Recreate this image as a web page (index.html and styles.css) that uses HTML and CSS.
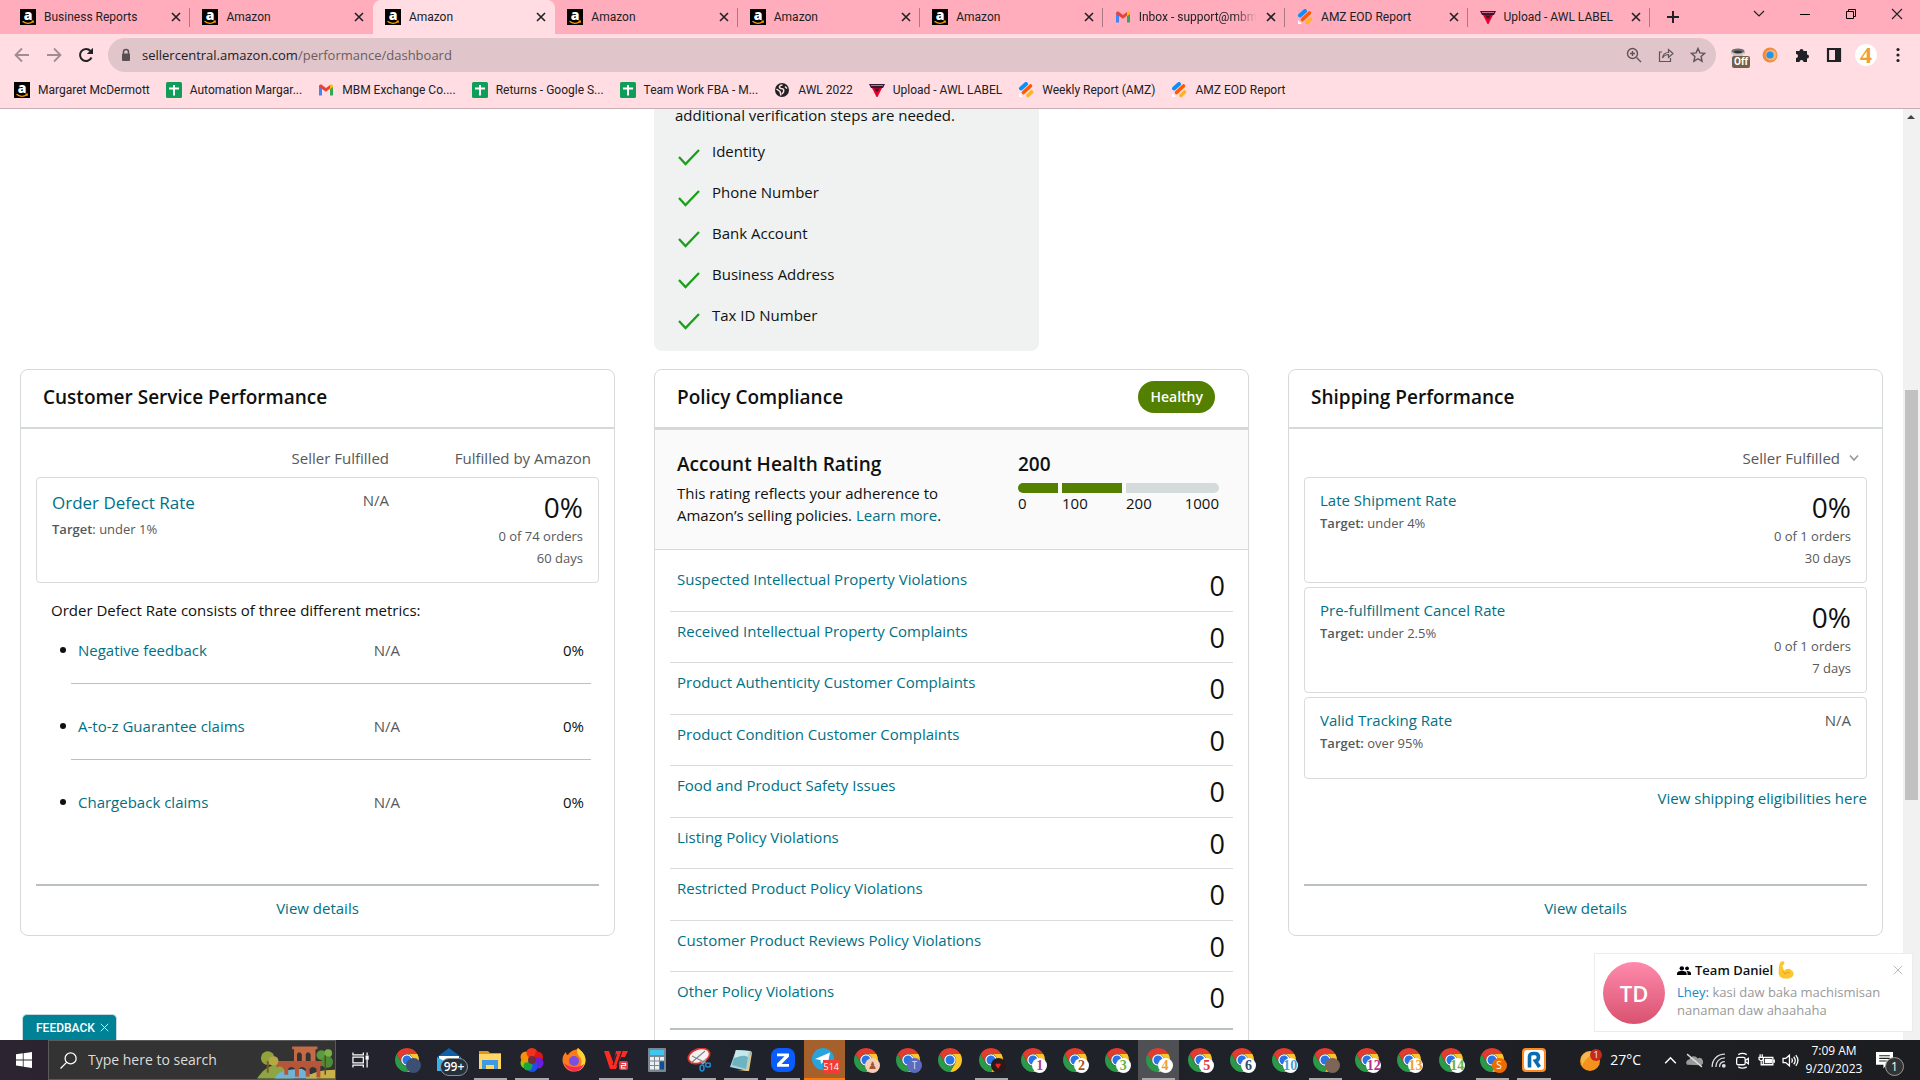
FILE: index.html
```html
<!DOCTYPE html>
<html lang="en">
<head>
<meta charset="utf-8">
<title>Amazon</title>
<link rel="stylesheet" href="styles.css">
</head>
<body>
<svg class="sprite" aria-hidden="true">
  <symbol id="amazon" viewBox="0 0 16 16"><rect width="16" height="16" fill="#000"/><text x="8" y="11" font-family="Open Sans, sans-serif" font-weight="800" font-size="14" fill="#fff" text-anchor="middle">a</text><path d="M2.5 12.3c3 2.6 7.500 2.600 10.300.4M11.500 12.200l1.800-.1-.3 1.700" fill="none" stroke="#f90" stroke-width="1.200"/></symbol>
  <symbol id="sheet" viewBox="0 0 16 16"><rect width="16" height="16" rx="1.500" fill="#109d59"/><path d="M8 3v10.500M3 6.500h10" stroke="#fff" stroke-width="1.900"/></symbol>
  <symbol id="gmail" viewBox="0 0 16 16"><path d="M1 13.500V4l3 2.200v7.300z" fill="#4285f4"/><path d="M12 13.500V6.200L15 4v9.500z" fill="#34a853"/><path d="M1 4.500C1 2.500 3 2.200 4 3l4 3 4-3v3.500L8 9.800 1 5z" fill="#ea4335"/><path d="M12 3c1-.8 3-.5 3 1.500V5l-3 2.200z" fill="#fbbc04"/></symbol>
  <symbol id="globe" viewBox="0 0 16 16"><circle cx="8" cy="8" r="7" fill="#202124"/><path d="M8.500 3C5 3 4.500 6 7 6.500c3 .5 3 1 2.500 3.500L8 12M2.500 7 6 9.500l1 4M11 4.500l2 2" fill="none" stroke="#ffdde3" stroke-width="1.500"/></symbol>
  <symbol id="awl" viewBox="0 0 16 16"><path d="M0 2h16l-2 4H2z" fill="#3a1630"/><path d="M2 3.500h12" stroke="#d66a8c" stroke-width="1"/><path d="M3 6h10L8.500 15h-1z" fill="#e4002b"/><path d="M5 6.500h6L8 10z" fill="#3a1630"/></symbol>
  <symbol id="pack" viewBox="0 0 16 16"><path d="M3 6.500 8 2" stroke="#0a8fff" stroke-width="4" stroke-linecap="round"/><path d="M5.500 10.500 12.500 4" stroke="#ff5a00" stroke-width="3.600" stroke-linecap="round"/><path d="M10 13.500 13.500 10" stroke="#ffb41f" stroke-width="3.600" stroke-linecap="round"/><path d="M1 11v4h4z" fill="#fff"/></symbol>
  <symbol id="close" viewBox="0 0 12 12"><path d="M2 2l8 8M10 2l-8 8" fill="none" stroke="currentColor" stroke-width="1.600"/></symbol>
  <symbol id="thinclose" viewBox="0 0 12 12"><path d="M1 1l10 10M11 1 1 11" fill="none" stroke="currentColor" stroke-width="1.100"/></symbol>
  <symbol id="check" viewBox="0 0 24 18"><path d="M2 9l6.500 7L22 2" fill="none" stroke="#18a018" stroke-width="2.300"/></symbol>
  <symbol id="chrome" viewBox="0 0 24 24"><path d="M1.610 6A12 12 0 0 1 22.390 6H12A6 6 0 0 0 6.800 15Z" fill="#e33b2e"/><path d="M22.390 6A12 12 0 0 1 12 24L17.200 15A6 6 0 0 0 12 6Z" fill="#fcc629"/><path d="M12 24A12 12 0 0 1 1.610 6L6.800 15A6 6 0 0 0 17.200 15Z" fill="#2a9a48"/><circle cx="12" cy="12" r="5.800" fill="#fff"/><circle cx="12" cy="12" r="4.500" fill="#2a74e8"/></symbol>
</svg>

<header class="browser">
  <div class="tabstrip">
    <div class="tabs">
      <div class="tab"><svg class="fav"><use href="#amazon"/></svg><span class="tab-title">Business Reports</span><button class="tab-close" aria-label="Close tab"><svg><use href="#close"/></svg></button></div>
      <div class="tab no-line"><svg class="fav"><use href="#amazon"/></svg><span class="tab-title">Amazon</span><button class="tab-close" aria-label="Close tab"><svg><use href="#close"/></svg></button></div>
      <div class="tab active"><svg class="fav"><use href="#amazon"/></svg><span class="tab-title">Amazon</span><button class="tab-close" aria-label="Close tab"><svg><use href="#close"/></svg></button></div>
      <div class="tab"><svg class="fav"><use href="#amazon"/></svg><span class="tab-title">Amazon</span><button class="tab-close" aria-label="Close tab"><svg><use href="#close"/></svg></button></div>
      <div class="tab"><svg class="fav"><use href="#amazon"/></svg><span class="tab-title">Amazon</span><button class="tab-close" aria-label="Close tab"><svg><use href="#close"/></svg></button></div>
      <div class="tab"><svg class="fav"><use href="#amazon"/></svg><span class="tab-title">Amazon</span><button class="tab-close" aria-label="Close tab"><svg><use href="#close"/></svg></button></div>
      <div class="tab"><svg class="fav"><use href="#gmail"/></svg><span class="tab-title fade">Inbox - support@mbm</span><button class="tab-close" aria-label="Close tab"><svg><use href="#close"/></svg></button></div>
      <div class="tab"><svg class="fav"><use href="#pack"/></svg><span class="tab-title">AMZ EOD Report</span><button class="tab-close" aria-label="Close tab"><svg><use href="#close"/></svg></button></div>
      <div class="tab"><svg class="fav"><use href="#awl"/></svg><span class="tab-title">Upload - AWL LABEL</span><button class="tab-close" aria-label="Close tab"><svg><use href="#close"/></svg></button></div>
    </div>
    <button class="new-tab" aria-label="New tab"><svg viewBox="0 0 14 14"><path d="M7 1v12M1 7h12" stroke="#202124" stroke-width="2"/></svg></button>
    <div class="window-controls">
      <button aria-label="Search tabs"><svg viewBox="0 0 12 12"><path d="M1 3l5 5 5-5" fill="none" stroke="#202124" stroke-width="1.200"/></svg></button>
      <button aria-label="Minimize"><svg viewBox="0 0 12 12"><path d="M1 6.500h10" stroke="#000"/></svg></button>
      <button aria-label="Restore"><svg viewBox="0 0 12 12"><path d="M1.500 3.500h7v7h-7zM3.500 3.500v-2h7v7h-2" fill="none" stroke="#000"/></svg></button>
      <button aria-label="Close"><svg><use href="#thinclose"/></svg></button>
    </div>
  </div>

  <div class="toolbar">
    <button class="nav-btn muted" aria-label="Back"><svg viewBox="0 0 16 16"><path d="M15 8H2M8 1.500 1.500 8 8 14.500" fill="none" stroke="currentColor" stroke-width="1.800"/></svg></button>
    <button class="nav-btn muted" aria-label="Forward"><svg viewBox="0 0 16 16"><path d="M1 8h13M8 1.500 14.500 8 8 14.500" fill="none" stroke="currentColor" stroke-width="1.800"/></svg></button>
    <button class="nav-btn" aria-label="Reload"><svg viewBox="0 0 16 16"><path d="M13.500 10.500A6 6 0 1 1 12.500 4" fill="none" stroke="currentColor" stroke-width="2"/><path d="M15 .8V7H8.800z" fill="currentColor"/></svg></button>
    <div class="omnibox">
      <svg class="lock" viewBox="0 0 10 14"><path d="M2.500 6V4a2.500 2.500 0 0 1 5 0v2" fill="none" stroke="#5a4f52" stroke-width="1.500"/><rect x="1" y="5.500" width="8" height="7.500" rx="1" fill="#5a4f52"/></svg>
      <span class="url">sellercentral.amazon.com<span class="path">/performance/dashboard</span></span>
      <button aria-label="Zoom"><svg viewBox="0 0 16 16"><circle cx="6.500" cy="6.500" r="5" fill="none" stroke="currentColor" stroke-width="1.400"/><path d="M10.500 10.500 15 15M4 6.500h5M6.500 4v5" stroke="currentColor" stroke-width="1.400"/></svg></button>
      <button aria-label="Share"><svg viewBox="0 0 16 16"><path d="M4 5H1.500v9.500h11V11M4.500 11c.5-4 3-5.500 6-5.500V2.500L15 6.500l-4.500 4v-3c-2.500 0-4.500 1-6 3.500z" fill="none" stroke="currentColor" stroke-width="1.200"/></svg></button>
      <button aria-label="Bookmark"><svg viewBox="0 0 16 16"><path d="M8 1.500l1.900 4.400 4.800.4-3.600 3.200 1 4.700L8 11.700l-4.100 2.500 1-4.700L1.300 6.300l4.800-.4z" fill="none" stroke="currentColor" stroke-width="1.400"/></svg></button>
    </div>
    <div class="extensions">
      <button class="ext-off" aria-label="Extension off"><svg viewBox="0 0 16 16"><path d="M1 4v3h2v5h10V7h2V4z" fill="#c9c4c4"/><ellipse cx="8" cy="4" rx="6.500" ry="2.500" fill="#6e6e6e"/><ellipse cx="8" cy="5" rx="4" ry="1.300" fill="#333"/></svg><span class="off">Off</span></button>
      <button aria-label="Firefox relay"><svg viewBox="0 0 16 16"><circle cx="8" cy="8" r="7.500" fill="#f28a3c"/><circle cx="9" cy="8" r="5.500" fill="#f7b277"/><circle cx="8" cy="8" r="3.600" fill="#2196e8"/></svg></button>
      <button aria-label="Extensions"><svg viewBox="0 0 16 16"><path d="M2 4h3.500a2 2 0 1 1 4 0H13v3.500a2 2 0 1 1 0 4V15H9.500a2 2 0 1 0-4 0H2v-4a2 2 0 1 0 0-4z" fill="#202124"/></svg></button>
      <button aria-label="Side panel"><svg viewBox="0 0 16 16"><path d="M2 2h12v12H2z" fill="none" stroke="#202124" stroke-width="2.200"/><path d="M9 2h5v12H9z" fill="#202124"/></svg></button>
      <button class="profile" aria-label="Profile">4</button>
      <button aria-label="Menu"><svg viewBox="0 0 16 16" fill="#202124"><circle cx="8" cy="2.500" r="1.600"/><circle cx="8" cy="8" r="1.600"/><circle cx="8" cy="13.500" r="1.600"/></svg></button>
    </div>
  </div>

  <nav class="bookmarks">
    <a href="#"><svg><use href="#amazon"/></svg>Margaret McDermott</a>
    <a href="#"><svg><use href="#sheet"/></svg>Automation Margar...</a>
    <a href="#"><svg><use href="#gmail"/></svg>MBM Exchange Co....</a>
    <a href="#"><svg><use href="#sheet"/></svg>Returns - Google S...</a>
    <a href="#"><svg><use href="#sheet"/></svg>Team Work FBA - M...</a>
    <a href="#"><svg><use href="#globe"/></svg>AWL 2022</a>
    <a href="#"><svg><use href="#awl"/></svg>Upload - AWL LABEL</a>
    <a href="#"><svg><use href="#pack"/></svg>Weekly Report (AMZ)</a>
    <a href="#"><svg><use href="#pack"/></svg>AMZ EOD Report</a>
  </nav>
</header>

<div class="viewport">
  <main class="page">
    <div class="columns">
      <section class="verification">
        <p>additional verification steps are needed.</p>
        <ul>
          <li><svg><use href="#check"/></svg>Identity</li>
          <li><svg><use href="#check"/></svg>Phone Number</li>
          <li><svg><use href="#check"/></svg>Bank Account</li>
          <li><svg><use href="#check"/></svg>Business Address</li>
          <li><svg><use href="#check"/></svg>Tax ID Number</li>
        </ul>
      </section>

      <section class="card service">
        <div class="card-head"><h2>Customer Service Performance</h2></div>
        <div class="card-body">
          <div class="labels two"><span>Seller Fulfilled</span><span>Fulfilled by Amazon</span></div>
          <div class="metric">
            <div class="metric-name"><a class="large" href="#">Order Defect Rate</a><p><b>Target</b>: under 1%</p></div>
            <span class="na">N/A</span>
            <div class="metric-value"><strong>0%</strong><span>0 of 74 orders</span><span>60 days</span></div>
          </div>
          <p class="intro">Order Defect Rate consists of three different metrics:</p>
          <ul class="breakdown">
            <li><div><a href="#">Negative feedback</a><span class="na">N/A</span><span class="pct">0%</span></div></li>
            <li><div><a href="#">A-to-z Guarantee claims</a><span class="na">N/A</span><span class="pct">0%</span></div></li>
            <li><div><a href="#">Chargeback claims</a><span class="na">N/A</span><span class="pct">0%</span></div></li>
          </ul>
          <div class="card-foot"><a href="#">View details</a></div>
        </div>
      </section>

      <section class="card policy">
        <div class="card-head"><h2>Policy Compliance</h2><span class="pill">Healthy</span></div>
        <div class="rating">
          <div class="rating-text"><h2>Account Health Rating</h2><p>This rating reflects your adherence to Amazon’s selling policies. <a href="#">Learn more</a>.</p></div>
          <div class="rating-scale">
            <h2>200</h2>
            <div class="scale"><i class="on"></i><i class="on"></i><i></i></div>
            <div class="scale-labels"><span>0</span><span>100</span><span>200</span><span>1000</span></div>
          </div>
        </div>
        <ul class="violations">
          <li><a href="#">Suspected Intellectual Property Violations</a><span>0</span></li>
          <li><a href="#">Received Intellectual Property Complaints</a><span>0</span></li>
          <li><a href="#">Product Authenticity Customer Complaints</a><span>0</span></li>
          <li><a href="#">Product Condition Customer Complaints</a><span>0</span></li>
          <li><a href="#">Food and Product Safety Issues</a><span>0</span></li>
          <li><a href="#">Listing Policy Violations</a><span>0</span></li>
          <li><a href="#">Restricted Product Policy Violations</a><span>0</span></li>
          <li><a href="#">Customer Product Reviews Policy Violations</a><span>0</span></li>
          <li><a href="#">Other Policy Violations</a><span>0</span></li>
        </ul>
      </section>

      <section class="card shipping">
        <div class="card-head"><h2>Shipping Performance</h2></div>
        <div class="card-body">
          <div class="labels"><button class="fulfil">Seller Fulfilled<svg viewBox="0 0 10 10"><path d="M1 2.500l4 4.500 4-4.500" fill="none" stroke="#999" stroke-width="1.700"/></svg></button></div>
          <div class="metric-list">
            <div class="metric">
              <div class="metric-name"><a href="#">Late Shipment Rate</a><p><b>Target:</b> under 4%</p></div>
              <div class="metric-value"><strong>0%</strong><span>0 of 1 orders</span><span>30 days</span></div>
            </div>
            <div class="metric">
              <div class="metric-name"><a href="#">Pre-fulfillment Cancel Rate</a><p><b>Target:</b> under 2.5%</p></div>
              <div class="metric-value"><strong>0%</strong><span>0 of 1 orders</span><span>7 days</span></div>
            </div>
            <div class="metric">
              <div class="metric-name"><a href="#">Valid Tracking Rate</a><p><b>Target:</b> over 95%</p></div>
              <span class="na">N/A</span>
            </div>
          </div>
          <a class="eligibility" href="#">View shipping eligibilities here</a>
          <div class="card-foot"><a href="#">View details</a></div>
        </div>
      </section>
    </div>
  </main>
  <div class="scrollbar"><svg viewBox="0 0 16 16"><path d="M4 10l4-4 4 4z" fill="#444"/></svg><span class="thumb"></span></div>
  <button class="feedback">FEEDBACK<svg><use href="#thinclose"/></svg></button>
  <aside class="toast">
    <span class="avatar">TD</span>
    <div class="toast-text">
      <h3><svg viewBox="0 0 16 12"><circle cx="5.500" cy="3.500" r="2.500"/><path d="M0 11V9.500C0 7 3 6.500 5.500 6.500S11 7 11 9.500V11z"/><circle cx="11.500" cy="3.500" r="2.200"/><path d="M12 11V9c0-1-.5-2-1.300-2.500C13 6.300 16 7 16 9v2z"/></svg>Team Daniel <svg class="arm" viewBox="0 0 20 22"><path d="M3 1.500C4.500 0 8 0 8 2S7 5 5.800 5c0 2.500.8 4.500 2 7 1.500-2 4.500-3 7.200-2 3.500 1.500 5 4.500 4 7.500-1.500 3.500-6 4.500-10 4C3.500 21 1 18 1 14c0-5 .5-10 2-12.500z" fill="#fdc530"/><path d="M6 13c2 .5 3 2 3 3.500M9 15.500c2-2 4-2 5.500-1" fill="none" stroke="#e39a13" stroke-width="1.200"/></svg></h3>
      <p><b>Lhey:</b> kasi daw baka machismisan nanaman daw ahaahaha</p>
    </div>
    <button aria-label="Dismiss"><svg><use href="#thinclose"/></svg></button>
  </aside>
</div>

<footer class="taskbar">
  <button class="start" aria-label="Start"><svg viewBox="0 0 16 16" fill="#fff"><path d="M0 2.300 6.800 1.300v6.200H0zM7.600 1.200 16 0v7.500H7.600zM0 8.400h6.800v6.200L0 13.600zM7.600 8.400H16V16l-8.400-1.200z"/></svg></button>
  <label class="search">
    <svg class="lens" viewBox="0 0 16 16"><circle cx="10" cy="6" r="5.200" fill="none" stroke="#fff" stroke-width="1.200"/><path d="M6.200 9.800.5 15.500" stroke="#fff" stroke-width="1.200"/></svg>
    <input type="text" placeholder="Type here to search" aria-label="Search">
    <svg class="scene" viewBox="0 0 80 34"><path d="M0 34C8 22 14 20 24 20l14 14z" fill="#8da544"/><path d="M18 34c4-8 12-9 28-10l16 10z" fill="#6db4d8"/><path d="M50 34c4-6 16-9 30-9v9z" fill="#c9b14a"/><path d="M36 1h26v3h-2v12h-5V9q-3-4-5 0v7h-4V9q-3-4-5 0v7h-3V4h-2z" fill="#c46a46"/><path d="M20 16h48v5h-3v12h-4V24q-4-4-7 0v8h-4v-8q-4-4-7 0v8h-4v-8q-4-4-7 0v6h-4v-6q-4-4-8-1z" fill="#b5563a"/><circle cx="11" cy="13" r="7" fill="#93a03c"/><circle cx="17" cy="16" r="5" fill="#b3aa45"/><path d="M11 16v12" stroke="#7a5a2c" stroke-width="2"/><circle cx="66" cy="10" r="5" fill="#5c9a3c"/><circle cx="73" cy="8" r="4" fill="#79b04a"/><circle cx="72" cy="17" r="6" fill="#4f8b37"/><path d="M70 10v20" stroke="#5b4a25" stroke-width="1.500"/></svg>
  </label>
  <button class="taskview" aria-label="Task view"><svg viewBox="0 0 18 16" fill="none" stroke="#fff" stroke-width="1.300"><path d="M1 0v2.500h11V0M1 16v-2.500h11V16M1 5h11v6H1zM16 0v3M16 8v8"/><path d="M15 4h2v3h-2z" fill="#fff"/></svg></button>
  <div class="apps">
    <button class="app" aria-label="Chrome"><svg><use href="#chrome"/></svg><span class="badge" style="background:#3d4f73"></span></button>
    <button class="app" aria-label="Mail"><svg viewBox="0 0 24 24"><path d="M0 9 12 0l12 9z" fill="#0e62ad"/><path d="M2 8h20v8H2z" fill="#fff"/><path d="M0 9l12 7 12-7v14H0z" fill="#36b1ec"/></svg><span class="count">99+</span></button>
    <button class="app open" aria-label="File Explorer"><svg viewBox="0 0 24 24"><path d="M1 3h9l2 2h11v4H1z" fill="#d99a1c"/><path d="M1 6h22v15H1z" fill="#ffd667"/><path d="M4 21v-9h16v9h-4v-4H8v4z" fill="#3e9be0"/></svg></button>
    <button class="app open" aria-label="Colors"><svg viewBox="0 0 24 24"><circle cx="12" cy="5.500" r="5.500" fill="#f3321d"/><circle cx="17.500" cy="9" r="5.500" fill="#e01616"/><circle cx="18" cy="15" r="5.500" fill="#6a1ddb"/><circle cx="12" cy="18.500" r="5.500" fill="#1d4df0"/><circle cx="6" cy="15" r="5.500" fill="#8fce12"/><circle cx="8" cy="18" r="4.500" fill="#17a83c"/><circle cx="6" cy="9" r="5.500" fill="#f9920b"/><circle cx="11" cy="5" r="4.500" fill="#f3321d"/><circle cx="12" cy="12" r="4" fill="#752d35"/></svg></button>
    <button class="app" aria-label="Firefox"><svg viewBox="0 0 24 24"><path d="M12 2c2 0 3-1 4-2 2 2 7 6 7.500 12A11.500 11.500 0 1 1 .5 12C.500 8 2 6 4 4c0 2 1 3 2 3 1-2 3-4 6-5z" fill="#ff7a1a"/><path d="M16 0c3 3 8 6 7.500 13-.5 6-5 10-9 10 5-3 6-9 4-13-1-2-5-4-2.500-10z" fill="#ffd23a"/><path d="M2 15c2 6 7 8.500 12 8 5-.5 7-4 8-7-4 4-15 4-20-1z" fill="#f5295b"/><circle cx="12" cy="13" r="5" fill="#7b4fe0"/></svg></button>
    <button class="app open" aria-label="WPS Office"><svg viewBox="0 0 24 24"><path d="M0 3h5l4.500 12L12 3h12l-3 6h-4l-5 12H6z" fill="#ff2b22"/><path d="M12.500 6 9 17M18 3l-5 15" fill="none" stroke="#22232d" stroke-width="1.200"/><rect x="15" y="13" width="9" height="9" rx="2" fill="#e0414b"/><path d="M17.500 15.500h4v2h-4v2.500h4" fill="none" stroke="#fff" stroke-width="1.200"/></svg></button>
    <button class="app" aria-label="Calculator"><svg viewBox="0 0 24 24"><rect x="3" width="18" height="24" rx="1" fill="#7b8790"/><path d="M5 2h14v5H5z" fill="#40c4f0"/><path d="M5 9h4v3.500H5zM10 9h4v3.500h-4zM15 9h4v3.500h-4zM5 13.500h4V17H5zM10 13.500h4V17h-4zM5 18h4v3.500H5zM10 18h4v3.500h-4z" fill="#eee"/><path d="M15 13.500h4v8h-4z" fill="#0d4f96"/></svg></button>
    <button class="app open" aria-label="Snipping Tool"><svg viewBox="0 0 24 24"><ellipse cx="12" cy="8" rx="11" ry="7" transform="rotate(-20 12 8)" fill="#f2f2f2" stroke="#d9332b" stroke-width="1.800"/><path d="M4 15 18 3M5 8l14 7" stroke="#888" stroke-width="1.200"/><path d="M13 12l3 4M19 11l-3 5" stroke="#999" stroke-width="1.500"/><ellipse cx="15" cy="20" rx="2" ry="3" fill="none" stroke="#2187cf" stroke-width="1.600"/><ellipse cx="21" cy="17" rx="2.500" ry="2" fill="none" stroke="#2187cf" stroke-width="1.600"/></svg></button>
    <button class="app open" aria-label="Notepad"><svg viewBox="0 0 24 24"><path d="M7 2l15 1-3 20L1 19z" fill="#a8d5dd"/><path d="M7 2l13 1-3 18L3 17z" fill="#6fb3c0"/><path d="M7 2l13 1-1 6C14 6 9 9 5 10z" fill="#c9e8ec"/><path d="M22 3l1 2-3 18H8l10-1z" fill="#e3c683"/></svg></button>
    <button class="app open" aria-label="Zoom"><svg viewBox="0 0 24 24"><rect width="24" height="24" rx="8" fill="#0b5cff"/><path d="M6 5.500h12v3L10.500 16H18v2.800H6v-3L13.500 8.300H6z" fill="#fff"/></svg></button>
    <button class="app telegram" aria-label="Telegram"><svg viewBox="0 0 24 24"><circle cx="11" cy="12" r="11" fill="#29a3dc"/><path d="M3 12 18 5.500 15.500 18l-4.500-3-2 2-.5-4z" fill="#fff"/></svg><span class="red">514</span></button>
    <button class="app" aria-label="Chrome profile"><svg><use href="#chrome"/></svg><span class="badge plain" style="background:#f6cdb5;color:#a0543a">♟</span></button>
    <button class="app" aria-label="Chrome profile T"><svg><use href="#chrome"/></svg><span class="badge plain" style="background:#5c6bc0;color:#dde">T</span></button>
    <button class="app" aria-label="Chrome"><svg><use href="#chrome"/></svg></button>
    <button class="app open" aria-label="Chrome profile"><svg><use href="#chrome"/></svg><span class="badge plain" style="background:#2a1a1a;color:#e22">♥</span></button>
    <button class="app" aria-label="Chrome 1"><svg><use href="#chrome"/></svg><span class="badge" style="color:#b03a9a">1</span></button>
    <button class="app" aria-label="Chrome 2"><svg><use href="#chrome"/></svg><span class="badge" style="color:#a8501e">2</span></button>
    <button class="app" aria-label="Chrome 3"><svg><use href="#chrome"/></svg><span class="badge" style="color:#6cb33f">3</span></button>
    <button class="app open current" aria-label="Chrome 4"><svg><use href="#chrome"/></svg><span class="badge" style="color:#efa032">4</span></button>
    <button class="app" aria-label="Chrome 5"><svg><use href="#chrome"/></svg><span class="badge" style="color:#e0343a">5</span></button>
    <button class="app" aria-label="Chrome 6"><svg><use href="#chrome"/></svg><span class="badge" style="color:#2c4f70">6</span></button>
    <button class="app" aria-label="Chrome 10"><svg><use href="#chrome"/></svg><span class="badge" style="color:#4a9fd8">10</span></button>
    <button class="app open" aria-label="Chrome profile"><svg><use href="#chrome"/></svg><span class="badge" style="background:#7d6658"></span></button>
    <button class="app" aria-label="Chrome 12"><svg><use href="#chrome"/></svg><span class="badge" style="color:#b0308e">12</span></button>
    <button class="app" aria-label="Chrome 13"><svg><use href="#chrome"/></svg><span class="badge" style="color:#efa032">13</span></button>
    <button class="app" aria-label="Chrome 14"><svg><use href="#chrome"/></svg><span class="badge" style="color:#6cb33f">14</span></button>
    <button class="app open" aria-label="Chrome S"><svg><use href="#chrome"/></svg><span class="badge plain" style="background:#ef6c00;color:#fff">S</span></button>
    <button class="app open" aria-label="R"><svg viewBox="0 0 24 24"><rect width="24" height="24" rx="4" fill="#ff8a1f"/><rect x="2" y="2" width="20" height="20" rx="3" fill="#fff"/><path d="M7.500 19.500V9c0-3 1.500-3.500 4-3.500h1.500c4.500 0 4.500 6.500.5 7.500l4 6" fill="none" stroke="#0b6bb0" stroke-width="3.600"/></svg></button>
  </div>
  <div class="tray">
    <button class="weather"><svg viewBox="0 0 24 24"><circle cx="11" cy="13" r="10" fill="#f5921e"/><path d="M2 10a10 10 0 0 1 16-4c-5 0-12 4-15 12z" fill="#f7b84a"/><circle cx="17" cy="7" r="6" fill="#c42b1c"/><text x="17" y="10" font-family="Open Sans, sans-serif" font-size="9" fill="#fff" text-anchor="middle">1</text></svg>27°C</button>
    <button aria-label="Show hidden icons"><svg viewBox="0 0 16 16"><path d="M3 10.500l5-5 5 5" fill="none" stroke="#fff" stroke-width="1.400"/></svg></button>
    <button aria-label="OneDrive"><svg viewBox="0 0 16 16"><path d="M1 12a3 3 0 0 1 2-5 4.500 4.500 0 0 1 8-1 3.500 3.500 0 0 1 3 6.500z" fill="#9a9a9a"/><path d="M1 2l14 12" stroke="#ddd" stroke-width="1.300"/></svg></button>
    <button aria-label="Network"><svg viewBox="0 0 16 16" fill="none" stroke="#ddd" stroke-width="1.200"><path d="M2 14C2 7 7 2 14 2M5.500 14c0-5 3.500-8.500 8.500-8.500M9 14c0-3 2-5 5-5"/><circle cx="13" cy="13" r="1.200" fill="#ddd"/></svg></button>
    <button aria-label="Meet now"><svg viewBox="0 0 16 16" fill="none" stroke="#fff" stroke-width="1.200"><rect x="2.500" y="5" width="8" height="7" rx="1.500"/><path d="M10.500 8l3-2v5l-3-2M4 2.500Q8 0 12 2.500M4 14Q8 16.500 12 14"/></svg></button>
    <button aria-label="Battery"><svg viewBox="0 0 16 16" fill="none" stroke="#fff" stroke-width="1.200"><path d="M5 5h9v7H5zM15.300 7v3M2 2v3M4 2v3M1 5h4v2L3 8.500 1 7zM3 8v4h2"/><path d="M7 7h5.500v3H7z" fill="#fff"/></svg></button>
    <button aria-label="Volume"><svg viewBox="0 0 16 16" fill="none" stroke="#fff" stroke-width="1.200"><path d="M1 6h2.500L7 3v10l-3.500-3H1zM9 6q1.500 2 0 4M11 4.500q3 3.500 0 7M13 3q4 5 0 10"/></svg></button>
    <time class="clock"><span>7:09 AM</span><span>9/20/2023</span></time>
    <button class="notify" aria-label="Notifications"><svg viewBox="0 0 16 16"><path d="M0 0h16v12h-6l-3 3.500V12H0z" fill="#fff"/><path d="M3 3.500h10M3 6h10M3 8.500h7" stroke="#222"/></svg><span>1</span></button>
  </div>
</footer>
</body>
</html>
```
FILE: styles.css
```css
* { box-sizing: border-box; }
html, body { height: 100%; margin: 0; }
body {
  display: flex;
  flex-direction: column;
  overflow: hidden;
  background: #fff;
  color: #0f1111;
  font: 15px/20px "Open Sans", "Noto Sans", sans-serif;
}
h2, h3, p, ul { margin: 0; padding: 0; }
ul { list-style: none; }
a { color: #007185; text-decoration: none; }
button { margin: 0; padding: 0; border: 0; background: none; color: inherit; font: inherit; }
svg { display: block; flex: none; }
.sprite { position: absolute; width: 0; height: 0; }

/* Browser chrome */
.browser { flex: none; color: #202124; font: 12px/16px Roboto, "Open Sans", sans-serif; }
.tabstrip { display: flex; align-items: stretch; height: 34px; padding-left: 8px; background: #ffadbc; }
.tabs { display: flex; flex: 1; min-width: 0; }
.tab { position: relative; display: flex; flex: 1 1 0; align-items: center; gap: 8px; min-width: 0; padding: 0 8px 0 12px; }
.tab::after { content: ""; position: absolute; right: 0; top: 8px; width: 1px; height: 19px; background: #a87a84; }
.tab.no-line::after, .tab.active::after { display: none; }
.tab.active { border-radius: 8px 8px 0 0; background: #ffdde3; }
.fav { width: 16px; height: 16px; }
.tab-title { flex: 1; min-width: 0; overflow: hidden; white-space: nowrap; }
.tab-title.fade { -webkit-mask-image: linear-gradient(90deg, #000 80%, transparent); mask-image: linear-gradient(90deg, #000 80%, transparent); }
.tab-close svg { width: 12px; height: 12px; }
.new-tab { display: grid; width: 46px; place-items: center; }
.new-tab svg { width: 14px; height: 14px; }
.window-controls { display: flex; padding: 0 0 6px 40px; }
.window-controls button { display: grid; width: 46px; place-items: center; }
.window-controls svg { width: 12px; height: 12px; }

.toolbar { display: flex; align-items: center; height: 38px; padding: 4px 6px 0 6px; background: #ffdde3; }
.nav-btn { display: grid; width: 32px; place-items: center; }
.nav-btn svg { width: 16px; height: 16px; }
.muted { color: #a08d91; }
.omnibox { display: flex; flex: 1; align-items: center; height: 34px; margin-left: 6px; padding: 0 2px 0 13px; border-radius: 17px; background: #e0c5ca; color: #5f5357; }
.lock { width: 10px; height: 14px; margin-right: 11px; }
.url { flex: 1; color: #202124; font: 13px/18px "Open Sans", sans-serif; }
.path { color: #6b5d61; }
.omnibox button { display: grid; width: 32px; place-items: center; }
.omnibox svg:not(.lock) { width: 16px; height: 16px; }
.extensions { display: flex; align-items: center; padding-left: 6px; }
.extensions button { display: grid; position: relative; width: 32px; height: 32px; place-items: center; }
.extensions svg { width: 16px; height: 16px; }
.extensions .off { position: absolute; left: 10px; top: 17px; padding: 0 2px; border-radius: 2px; background: #74604a; color: #fff; font-size: 10px; font-weight: 700; line-height: 12px; }
.extensions .profile { width: 22px; height: 22px; margin: 0 5px; border-radius: 50%; background: #fff; color: #efa032; font: 700 24px/22px "Liberation Serif", serif; }

.bookmarks { display: flex; align-items: center; gap: 16px; height: 37px; padding-left: 14px; border-bottom: 1px solid #c9adb2; background: #ffdde3; }
.bookmarks a { display: flex; align-items: center; gap: 8px; color: #202124; white-space: nowrap; }
.bookmarks svg { width: 16px; height: 16px; }

/* Page */
.viewport { position: relative; display: flex; flex: 1; min-height: 0; overflow: hidden; }
.page { flex: 1; min-width: 0; }
.columns { display: grid; grid-template-columns: repeat(3, minmax(0, 1fr)); column-gap: 39px; align-items: start; padding: 0 20px; }
.verification { grid-column: 2; width: 385px; margin: -7px 0 18px; padding: 3px 20px 5px 21px; border-radius: 8px; background: #f0f2f2; }
.verification li { display: flex; gap: 11px; height: 41px; }
.verification ul { padding-top: 16px; }
.verification li svg { width: 24px; height: 18px; margin: 7px 0 0 2px; }
.service { grid-column: 1; }

.card { border: 1px solid #d5d9d9; border-radius: 8px; background: #fff; }
.service, .shipping { display: flex; flex-direction: column; min-height: 567px; }
h2 { font-size: 19px; font-weight: 600; line-height: 28px; }
.card-head { display: flex; align-items: center; justify-content: space-between; height: 59px; padding: 0 33px 3px 22px; border-bottom: 2px solid #d5d9d9; }
.pill { padding: 0 12px; border-radius: 16px; background: #538000; color: #fff; font-size: 14px; font-weight: 600; line-height: 32px; }
.card-body { display: flex; flex: 1; flex-direction: column; padding: 19px 15px 17px; }
.labels { display: grid; padding-right: 8px; margin-bottom: 9px; color: #565959; text-align: right; }
.labels.two { grid-template-columns: 1fr 202px; }
.fulfil { display: flex; gap: 9px; align-items: center; justify-self: end; }
.fulfil svg { width: 10px; height: 10px; }
.metric { display: flex; min-height: 82px; padding: 12px 15px 13px; border: 1px solid #d9dcdc; border-radius: 4px; color: #565959; }
.metric-name { flex: 1; }
.metric-name a { display: block; }
.metric-name .large { font-size: 17px; line-height: 26px; }
.metric-name p { padding-top: 3px; font-size: 13px; }
.metric-name b { font-weight: 600; }
.metric-value { width: 194px; text-align: right; font-size: 13px; line-height: 22px; }
.metric-value span, .metric-value strong { display: block; }
.metric-value strong { color: #0f1111; font-size: 28px; font-weight: 400; line-height: 35px; }
.metric-list { display: grid; gap: 4px; }
.intro { padding: 17px 15px 20px; }
.breakdown { padding: 0 8px 0 24px; }
.breakdown li { display: flex; gap: 5px; }
.breakdown li::before { content: ""; flex: none; width: 6px; height: 6px; margin-top: 7px; border-radius: 50%; background: #0f1111; }
.breakdown li + li { padding-top: 32px; }
.breakdown div { display: grid; flex: 1; grid-template-columns: 1fr 100px 184px; padding: 0 7px; text-align: right; }
.breakdown li:not(:last-child) div { padding-bottom: 23px; border-bottom: 1px solid #babfbf; }
.breakdown a { text-align: left; }
.na { color: #565959; }
.card-foot { margin-top: auto; padding-top: 12px; border-top: 2px solid #babfbf; text-align: center; }
.eligibility { padding-top: 9px; text-align: right; }

.policy { min-height: 700px; }
.policy .card-head { height: 60px; border-bottom-width: 3px; }
.rating { display: flex; justify-content: space-between; height: 120px; padding: 20px 29px 0 22px; border-bottom: 1px solid #d5d9d9; background: #fafafa; }
.rating-text p { max-width: 280px; padding-top: 4px; line-height: 22px; }
.rating-scale { width: 201px; }
.scale { display: grid; grid-template-columns: 40px 60px 1fr; gap: 4px; padding-top: 5px; }
.scale i { height: 10px; background: #d5dbdb; }
.scale .on { background: #538000; }
.scale i:first-child { border-radius: 5px 0 0 5px; }
.scale i:last-child { border-radius: 0 5px 5px 0; }
.scale-labels { display: grid; grid-template-columns: 40px 60px 1fr 1fr; column-gap: 4px; }
.scale-labels span:last-child { text-align: right; }
.violations { display: grid; grid-template-rows: repeat(9, 1fr); min-height: 470px; margin: 10px 15px 0; padding-bottom: 4px; border-bottom: 2px solid #babfbf; }
.violations li { display: flex; justify-content: space-between; padding: 9px 8px 0 7px; border-bottom: 1px solid #d9dcdc; }
.violations li:last-child { border: 0; }
.violations span { font-size: 27px; line-height: 34px; }

.scrollbar { flex: none; width: 17px; background: #f1f1f1; }
.scrollbar svg { width: 16px; height: 16px; }
.thumb { display: block; width: 13px; height: 410px; margin: 265px auto 0; background: #c1c1c1; }

.feedback { position: absolute; left: 22px; bottom: 0; display: flex; align-items: center; gap: 5px; height: 26px; padding: 0 7px 0 13px; border: 1px solid #c5d8da; border-bottom: 0; border-radius: 5px 5px 0 0; background: #008296; color: #fff; font: 500 12px/16px Roboto, sans-serif; }
.feedback svg { width: 9px; height: 9px; }

.toast { position: absolute; right: 7px; bottom: 8px; display: flex; align-items: flex-start; width: 319px; height: 79px; padding: 8px 9px 8px 8px; border: 1px solid #ececec; background: #fff; }
.avatar { width: 62px; height: 62px; border-radius: 50%; background: linear-gradient(#ff8aac, #d8526f); color: #fff; font-size: 22px; font-weight: 600; line-height: 62px; text-align: center; }
.toast-text { flex: 1; padding-left: 12px; }
.toast h3 { display: flex; align-items: center; gap: 4px; height: 16px; font-size: 13px; font-weight: 600; }
.toast h3 svg { width: 14px; height: 11px; }
.toast h3 .arm { width: 18px; height: 18px; }
.toast p { padding-top: 5px; color: #999; font-size: 13px; line-height: 18px; }
.toast b { color: #168acd; font-weight: 400; }
.toast button { padding-top: 3px; color: #b5b5b5; }
.toast button svg { width: 10px; height: 10px; }

/* Taskbar */
.taskbar { display: flex; flex: none; height: 40px; background: linear-gradient(90deg, #2c2430, #22232d 20%, #1f2229 60%, #1c1d20); color: #fff; font-size: 14px; }
.start { display: grid; width: 48px; place-items: center; }
.start svg { width: 16px; height: 16px; }
.search { display: flex; align-items: center; width: 288px; padding-left: 11px; border: 1px solid #5a5a5a; background: #333; }
.lens { width: 17px; height: 17px; }
.search input { flex: 1; min-width: 0; padding: 0 0 0 11px; border: 0; background: none; color: #e8e8e8; font: 14px/20px "Open Sans", sans-serif; }
.search input::placeholder { color: #dcdcdc; opacity: 1; }
.scene { align-self: end; width: 78px; height: 34px; }
.taskview { display: grid; width: 50px; padding-right: 2px; place-items: center; }
.taskview svg { width: 17px; height: 16px; }
.apps { display: flex; flex: 1; }
.app { position: relative; display: grid; flex: 1 1 0; place-items: center; }
.app > svg { width: 24px; height: 24px; }
.app.open::after { content: ""; position: absolute; right: 4px; bottom: 0; left: 4px; height: 2px; background: #aaa8a8; }
.app.current { background: #4e5054; }
.app.telegram { background: #a5602c; border-bottom: 2px solid #ff7800; }
.badge { position: absolute; left: 20px; top: 18px; width: 15px; height: 15px; border-radius: 50%; background: #fff; font: 700 14px/15px "Liberation Serif", serif; text-align: center; }
.badge.plain { font: 10px/15px "Open Sans", sans-serif; }
.count { position: absolute; left: 12px; top: 18px; padding: 0 3px; border: 1px solid #8a8f94; border-radius: 9px; background: #24303a; font-size: 12px; font-weight: 600; line-height: 16px; }
.red { position: absolute; left: 19px; top: 20px; padding: 0 1px; background: #f23c34; font-size: 9px; line-height: 14px; }
.tray { display: flex; align-items: center; margin-left: 24px; padding-right: 6px; }
.tray button { display: grid; width: 24px; place-items: center; }
.tray svg { width: 17px; height: 17px; }
.tray .weather { display: flex; gap: 7px; width: auto; align-items: center; margin-right: 17px; }
.tray .weather svg { width: 24px; height: 24px; }
.clock { display: grid; width: 64px; text-align: center; font-size: 12px; line-height: 18px; }
.tray .notify { position: relative; width: 48px; height: 40px; padding-right: 12px; }
.notify span { position: absolute; left: 19px; top: 17px; width: 19px; height: 19px; border: 1px solid #999; border-radius: 50%; background: #333; font-size: 12px; line-height: 17px; text-align: center; }
```
